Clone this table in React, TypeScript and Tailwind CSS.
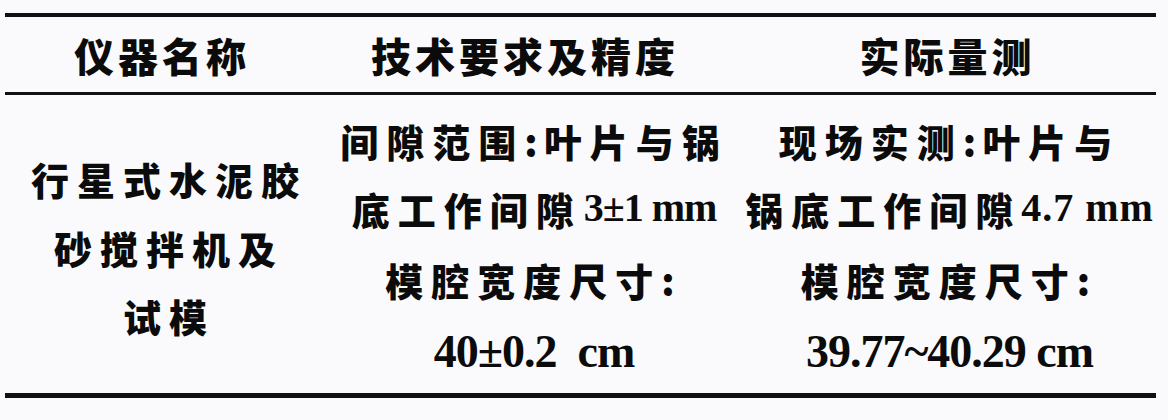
import React from "react";

const cjk = "font-['Noto_Sans_CJK_SC',sans-serif] font-black text-[#0b0b0b]";
const num = "font-['Liberation_Serif','Noto_Sans_CJK_SC',serif] font-bold";

function Line({ children, className = "" }: { children: React.ReactNode; className?: string }) {
  return (
    <div className={`flex items-center justify-center whitespace-pre ${className}`}>
      {children}
    </div>
  );
}

export default function App() {
  return (
    <div className="w-[1168px] h-[420px] bg-[#fafafc] pt-[13px] pl-[5px]">
      <div className={`w-[1151px] border-t-4 border-[#111] ${cjk}`}>
        {/* header */}
        <div className="grid grid-cols-[320px_410px_421px] h-[78px] border-b-[3px] border-[#111] text-[40px] tracking-[4px]">
          <div className="flex items-center justify-center pr-[6px]">仪器名称</div>
          <div className="flex items-center justify-center pr-[10px]">技术要求及精度</div>
          <div className="flex items-center justify-center pl-[4px]">实际量测</div>
        </div>

        {/* body */}
        <div className="grid grid-cols-[320px_410px_421px] h-[303px] border-b-[5px] border-[#111] text-[38px] tracking-[8px]">
          <div className="flex flex-col justify-center pl-[8px] pt-[4px]">
            <Line className="h-[70px]">行星式水泥胶</Line>
            <Line className="h-[68px]">砂搅拌机及</Line>
            <Line className="h-[68px]">试模</Line>
          </div>
          <div className="flex flex-col justify-center pl-[8px] pt-[6px]">
            <Line className="h-[66px]">
              间隙范围<span className="tracking-[6px]">:</span>叶片与锅
            </Line>
            <Line className="h-[70px]">
              底工作间隙
              <span className={`${num} text-[40px] tracking-[-1px] ml-[2px]`}>3±1 mm</span>
            </Line>
            <Line className="h-[72px]">模腔宽度尺寸:</Line>
            <Line className="h-[72px]">
              <span className={`${num} text-[46px] tracking-[-1px]`}>40±0.2  cm</span>
            </Line>
          </div>
          <div className="flex flex-col justify-center pl-[8px] pt-[6px]">
            <Line className="h-[66px]">
              现场实测<span className="tracking-[6px]">:</span>叶片与
            </Line>
            <Line className="h-[70px]">
              锅底工作间隙
              <span className={`${num} text-[40px] tracking-[1px]`}>4.7 mm</span>
            </Line>
            <Line className="h-[72px]">模腔宽度尺寸:</Line>
            <Line className="h-[72px]">
              <span className={`${num} text-[46px] tracking-[-1px]`}>39.77~40.29 cm</span>
            </Line>
          </div>
        </div>
      </div>
    </div>
  );
}
